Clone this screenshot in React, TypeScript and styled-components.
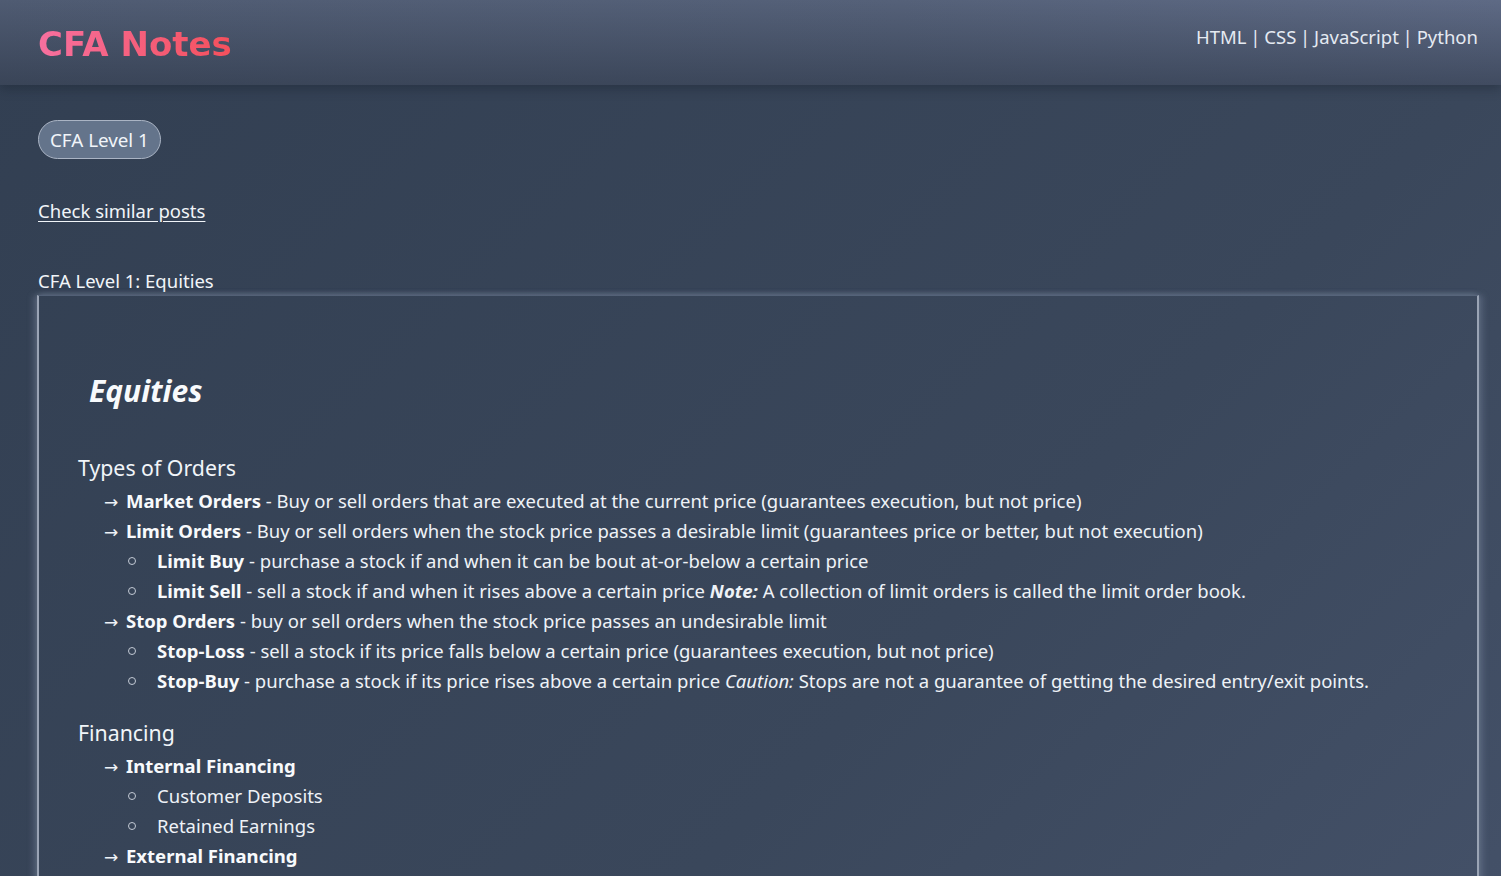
import React from "react";
import styled, { createGlobalStyle } from "styled-components";

const Global = createGlobalStyle`
  html, body { margin: 0; padding: 0; }
  body {
    font-family: "Noto Sans", "Open Sans", sans-serif;
    color: #f1f5f9;
    background: linear-gradient(135deg, #323f52 0%, #3a475b 60%, #46536b 100%);
    min-height: 100vh;
  }
`;

const Header = styled.header`
  height: 85px;
  display: flex;
  align-items: flex-start;
  justify-content: space-between;
  padding: 0 23px 0 38px;
  background: linear-gradient(180deg, rgba(40, 50, 66, 0) 0%, rgba(40, 50, 66, 0.55) 100%),
    linear-gradient(90deg, #4f5b72 0%, #556179 60%, #5e6a85 100%);
  box-shadow: 0 4px 10px rgba(20, 28, 40, 0.35);
  position: relative;
`;

const Logo = styled.h1`
  margin: 22px 0 0;
  font-family: "DejaVu Sans", sans-serif;
  font-weight: 800;
  font-size: 34px;
  letter-spacing: 0;
  line-height: 44px;
  background: linear-gradient(90deg, #f7709f, #f4505c);
  -webkit-background-clip: text;
  background-clip: text;
  color: transparent;
`;

const Nav = styled.nav`
  margin-top: 23px;
  font-size: 18.5px;
  line-height: 28px;
  color: #e5eaf2;
  word-spacing: -1px;
`;

const Main = styled.main`
  padding: 35px 22px 0 37px;
  display: flex;
  flex-direction: column;
  align-items: flex-start;
`;

const Pill = styled.span`
  display: inline-flex;
  align-items: center;
  height: 37px;
  padding: 0 11px;
  margin-left: 1px;
  border: 1px solid #aab4c4;
  border-radius: 20px;
  background: #64748b;
  font-size: 18.8px;
  color: #f1f5f9;
`;

const SimilarLink = styled.a`
  margin-top: 38px;
  margin-left: 1px;
  font-size: 18.5px;
  line-height: 28px;
  color: #f1f5f9;
  text-decoration: underline;
  text-underline-offset: 3px;
`;

const PostTitle = styled.div`
  margin-top: 42px;
  margin-left: 1px;
  font-size: 18.5px;
  line-height: 28px;
`;

const Card = styled.article`
  align-self: stretch;
  padding: 76px 39px 40px 39px;
  border-left: 2px solid #9aa4b5;
  border-right: 2px solid #9aa4b5;
  border-top: 1px solid rgba(120, 135, 160, 0.45);
  box-shadow: -4px 0 6px rgba(160, 172, 195, 0.25), 4px 0 6px rgba(160, 172, 195, 0.25),
    0 -2px 5px rgba(160, 172, 195, 0.12);
  min-height: 700px;
`;

const Title = styled.h2`
  margin: 0 0 43px 11px;
  font-weight: 700;
  font-style: italic;
  font-size: 30px;
  line-height: 38px;
  color: #f8fafc;
`;

const SectionTitle = styled.h3<{ $gap?: number }>`
  margin: ${(p) => p.$gap ?? 0}px 0 3px;
  font-weight: 400;
  font-size: 21.3px;
  line-height: 30px;
  color: #f1f5f9;
`;

const List = styled.ul`
  list-style: none;
  margin: 0;
  padding: 0 0 0 26px;
`;

const Item = styled.li`
  font-size: 18.5px;
  line-height: 30px;
  color: #eef2f7;
`;

const Arrow = styled.span`
  display: inline-block;
  width: 22px;
  font-family: "DejaVu Sans", sans-serif;
  font-size: 17px;
  line-height: 1;
`;

const SubList = styled.ul`
  list-style: none;
  margin: 0;
  padding: 0 0 0 53px;
`;

const SubItem = styled.li`
  position: relative;
  font-size: 18.5px;
  line-height: 30px;
  color: #eef2f7;
  &::before {
    content: "";
    position: absolute;
    left: -29px;
    top: 11px;
    width: 6px;
    height: 6px;
    border: 1px solid #c3cad5;
    border-radius: 50%;
  }
`;

const B = styled.strong`
  font-weight: 700;
  color: #f8fafc;
`;

const BI = styled.strong`
  font-weight: 700;
  font-style: italic;
`;

const I = styled.em`
  font-style: italic;
`;

const ArrowItem = ({ children }: { children: React.ReactNode }) => (
  <Item>
    <Arrow>→</Arrow>
    {children}
  </Item>
);

export default function App() {
  return (
    <>
      <Global />
      <Header>
        <Logo>CFA Notes</Logo>
        <Nav>HTML | CSS | JavaScript | Python</Nav>
      </Header>
      <Main>
        <Pill>CFA Level 1</Pill>
        <SimilarLink href="#">Check similar posts</SimilarLink>
        <PostTitle>CFA Level 1: Equities</PostTitle>
        <Card>
          <Title>Equities</Title>
          <SectionTitle>Types of Orders</SectionTitle>
          <List>
            <ArrowItem>
              <B>Market Orders</B> - Buy or sell orders that are executed at the current price (guarantees
              execution, but not price)
            </ArrowItem>
            <ArrowItem>
              <B>Limit Orders</B> - Buy or sell orders when the stock price passes a desirable limit
              (guarantees price or better, but not execution)
              <SubList>
                <SubItem>
                  <B>Limit Buy</B> - purchase a stock if and when it can be bout at-or-below a certain price
                </SubItem>
                <SubItem>
                  <B>Limit Sell</B> - sell a stock if and when it rises above a certain price <BI>Note:</BI> A
                  collection of limit orders is called the limit order book.
                </SubItem>
              </SubList>
            </ArrowItem>
            <ArrowItem>
              <B>Stop Orders</B> - buy or sell orders when the stock price passes an undesirable limit
              <SubList>
                <SubItem>
                  <B>Stop-Loss</B> - sell a stock if its price falls below a certain price (guarantees
                  execution, but not price)
                </SubItem>
                <SubItem>
                  <B>Stop-Buy</B> - purchase a stock if its price rises above a certain price{" "}
                  <I>Caution:</I> Stops are not a guarantee of getting the desired entry/exit points.
                </SubItem>
              </SubList>
            </ArrowItem>
          </List>
          <SectionTitle $gap={22}>Financing</SectionTitle>
          <List>
            <ArrowItem>
              <B>Internal Financing</B>
              <SubList>
                <SubItem>Customer Deposits</SubItem>
                <SubItem>Retained Earnings</SubItem>
              </SubList>
            </ArrowItem>
            <ArrowItem>
              <B>External Financing</B>
            </ArrowItem>
          </List>
        </Card>
      </Main>
    </>
  );
}
